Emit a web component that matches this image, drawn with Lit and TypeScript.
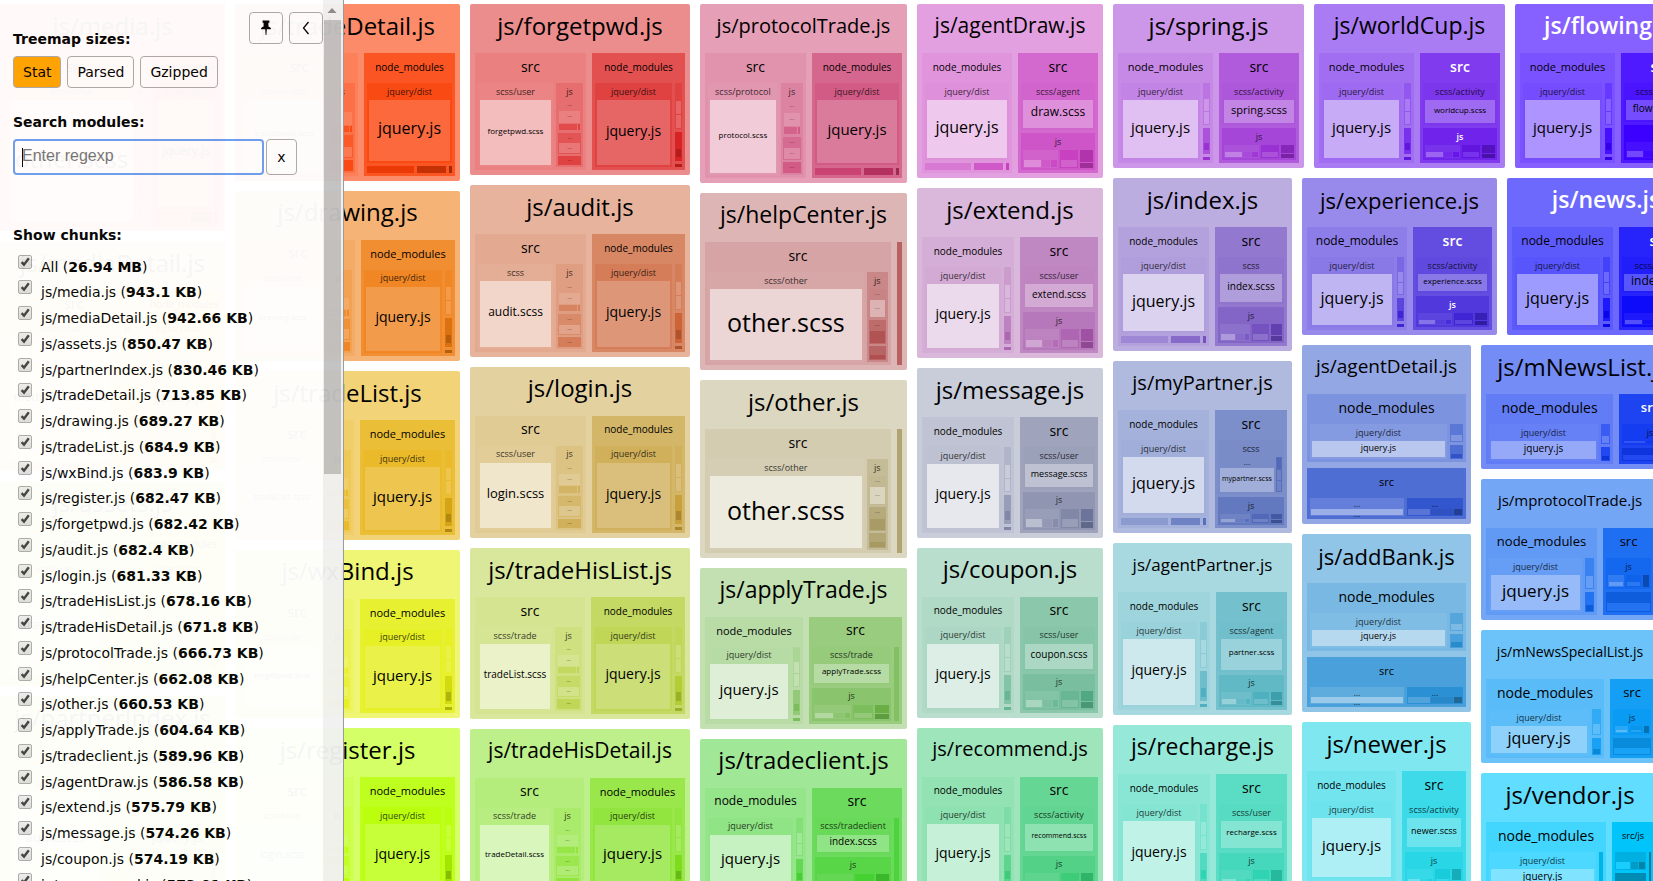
import { LitElement, html, css, svg, nothing, TemplateResult } from "lit";
import { customElement, property, state } from "lit/decorators.js";
import { classMap } from "lit/directives/class-map.js";

type Dir = "row" | "column";

interface Box {
  w: number;
  dir: Dir;
  level: number;
  label?: string;
  size?: number;
  light?: boolean;
  shade?: number;
  hsl?: [number, number, number];
  kids: Box[];
}

/* ---------- builders: w is the share that a box takes of its parent ---------- */

const layout = (w: number, dir: Dir, kids: Box[]): Box => ({ w, dir, level: 0, kids });
const strip = (w: number, dir: Dir, kids: Box[]): Box => ({ w, dir, level: 6, kids });
const block = (w: number, shade: number, kids: Box[] = [], dir: Dir = "column", label?: string, size = 6): Box => ({
  w, dir, level: kids.length ? 4 : 7, shade, kids, label, size,
});
const dots = (w: number, shade: number, size = 6): Box => block(w, shade, [], "column", "...", size);
const leaf = (label: string, size: number, shade: number, w = 1): Box => ({
  w, dir: "column", level: 5, label, size, shade, kids: [],
});
const group = (w: number, level: number, label: string, size: number, shade: number, dir: Dir, kids: Box[]): Box => ({
  w, dir, level, label, size, shade, kids,
});

const dist = (w: number, size: number, base: number, leafShade: number) =>
  group(w, 3, "jquery/dist", 9, base, "column", [leaf("jquery.js", size, leafShade)]);

const sideStrip = (s: number) =>
  strip(7, "column", [
    block(44, s - 3, [block(16, s - 3), block(13, s + 5), block(13, s + 5)]),
    block(28, s - 11, [block(15, s - 11), block(9, s - 19), block(2, s - 11)]),
    block(3, s - 19),
  ]);

const footStrip = (s: number) =>
  strip(7, "row", [block(45, s - 6), block(28, s - 14), block(3, s - 20)]);

/** node_modules drawn in the stronger tone, right of src. */
const nmDark = (w: number, nm: number, jq: number, foot = false) =>
  group(w, 2, "node_modules", nm, -14, foot ? "column" : "row", [
    dist(foot ? 79 : w - 16, jq, -17, -9),
    foot ? footStrip(-17) : sideStrip(-14),
  ]);

/** node_modules drawn in the pale tone, left of src. */
const nmPale = (w: number, nm: number, jq: number, foot = false) =>
  group(w, 2, "node_modules", nm, -3, foot ? "column" : "row", [
    dist(foot ? 76 : w - 16, jq, -4, 10),
    foot ? footStrip(-4) : sideStrip(-5),
  ]);

const jsTall = (w: number, s: number) =>
  group(w, 3, "js", 9, s, "column", [
    block(29, s, [
      dots(9, s),
      dots(11, s + 4),
      layout(6, "row", [block(17, s - 8), block(2, s - 10)]),
    ]),
    block(20, s - 6, [dots(8, s - 6), dots(9, s + 2)]),
    dots(9, s - 10),
  ]);

const jsFlat = (w: number, s: number) =>
  group(w, 3, "js", 9, s, "row", [
    block(33, s + 3, [block(7, s + 3), layout(6, "row", [block(13, s + 14), block(7, s + 1), block(4, s - 3)])]),
    block(18, s - 5, [block(7, s - 5), block(6, s + 3)]),
    layout(12, "column", [block(8, s - 12), block(4, s - 17)]),
  ]);

const srcTall = (w: number, folder: string, file: string, size: number, scssW = w - 36, jsW = 27) =>
  group(w, 2, "src", 14, -3, "row", [
    group(scssW, 3, folder, 9, -2, "column", [leaf(file, size, 11)]),
    jsTall(jsW, -7),
  ]);

const srcFrom = (w: number, stack: Box[], tail = false): Box =>
  group(w, 2, "src", 14, -14, "row", tail ? [layout(78, "column", stack), block(5, -22)] : [layout(1, "column", stack)]);

const srcStack = (w: number, folder: string, file: string, size: number, top: number, foot: number, tail = false): Box =>
  srcFrom(w, [group(top, 3, folder, 9, -15, "column", [leaf(file, size, -4)]), jsFlat(foot, -19)], tail);

const srcWide = (h: number): Box[] => [
  group(184, 2, "src", 14, -5, "row", [
    group(154, 3, "scss/other", 9, -4, "column", [leaf("other.scss", 25, 9)]),
    group(21, 3, "js", 9, -13, "column", [
      block(26, -14, [dots(8, -14), dots(h, -1)]),
      block(22, -21, [dots(9, -21), block(11, -28)]),
      block(13, -23, [block(6, -23), block(4, -29)]),
    ]),
  ]),
  block(5, -24),
];

const tile = (w: number, name: string, size: number, hsl: [number, number, number], kids: Box[], dir: Dir = "row", light = false): Box => ({
  w, dir, level: 1, label: `js/${name}.js`, size, hsl, shade: 0, kids, light,
});

const stackedTile = (w: number, name: string, size: number, hsl: [number, number, number]) =>
  tile(w, name, size, hsl, [
    group(67, 2, "node_modules", 14, -6, "row", [
      dist(134, 9, -4, 9),
      strip(13, "column", [block(17, -14, [block(8, -14), block(5, -5)]), block(13, -17, [block(6, -17), block(4, -26)])]),
    ]),
    group(50, 2, "src", 11, -17, "row", [
      block(92, -12, [dots(9, -12, 9), dots(7, 2, 9)]),
      block(55, -24, [dots(9, -24, 9), layout(6, "row", [block(20, -15), block(20, -27), block(7, -38)])]),
    ]),
  ], "column");

const withLightJs = (box: Box): Box => ({
  ...box,
  light: true,
  kids: box.kids.map((k) => ({ ...k, kids: k.kids.map((c) => (c.label === "js" ? { ...c, light: true } : c)) })),
});

const miniSrc = (w: number, light = false): Box => {
  const s = -18;
  return {
    ...group(w, 2, "src", 13, s, "column", [
      group(30, 3, "js", 9, s - 2, "row", [
        block(16, s + 4, [block(5, s + 4), block(5, s + 14)]),
        block(14, s - 4, [block(5, s - 4), block(4, s + 3)]),
        block(6, s - 16),
      ]),
      block(19, s - 7, [block(8, s - 7), block(7, s + 1)]),
    ]),
    light,
  };
};

const nmShort = (w: number, nm: number, jq: number) =>
  group(w, 2, "node_modules", nm, -4, "row", [
    dist(w - 18, jq, -3, 7),
    strip(9, "column", [block(26, -12, [block(14, -12), block(10, -3)]), block(17, -17, [block(9, -17), block(5, -26)])]),
  ]);

/* ---------- the bundle ---------- */

const treemap: Box = layout(1, "row", [
  layout(225, "column", [
    tile(227, "media", 24, [14, 100, 70], [srcTall(141, "scss/other", "other.scss", 24, 135, 0), nmDark(68, 10, 12, true)]),
    tile(230, "mediaDetail", 24, [48, 100, 70], [srcTall(135, "scss/other", "mediaDetail.scss", 12, 102, 24), nmDark(70, 10, 13)]),
    tile(205, "assets", 24, [60, 90, 72], [srcTall(132, "scss/user", "drawing.scss", 12, 92, 30), nmDark(74, 10, 13)]),
    tile(201, "partnerIndex", 24, [66, 90, 72], [srcTall(132, "scss/user", "audit.scss", 13, 92, 30), nmDark(74, 10, 13)]),
  ]),
  layout(225, "column", [
    tile(176, "tradeDetail", 24, [14, 96, 70], [srcTall(118, "scss/trade", "tradeDetail.scss", 8), nmDark(91, 10, 16, true)]),
    tile(170, "drawing", 24, [29, 87, 71], [srcTall(115, "scss/user", "drawing.scss", 8), nmDark(94, 11, 14)]),
    tile(168, "tradeList", 24, [45, 82, 71], [srcTall(114, "scss/user", "tradeList.scss", 9), nmDark(95, 11, 15)]),
    tile(168, "wxBind", 24, [63, 87, 71], [srcTall(114, "scss/user", "forgetpwd.scss", 8), nmDark(95, 11, 15)]),
    tile(168, "register", 24, [77, 100, 70], [srcTall(114, "scss/user", "login.scss", 10), nmDark(95, 11, 14)]),
  ]),
  layout(220, "column", [
    tile(171, "forgetpwd", 24, [0, 72, 74], [srcTall(111, "scss/user", "forgetpwd.scss", 8), nmDark(93, 10, 14)]),
    tile(171, "audit", 24, [18, 60, 76], [srcTall(111, "scss", "audit.scss", 12), nmDark(93, 10, 14)]),
    tile(171, "login", 24, [43, 56, 76], [srcTall(111, "scss/user", "login.scss", 13), nmDark(93, 10, 14)]),
    tile(170, "tradeHisList", 24, [71, 61, 76], [srcTall(110, "scss/trade", "tradeList.scss", 10), nmDark(94, 10, 14)]),
    tile(168, "tradeHisDetail", 21, [90, 76, 74], [srcTall(109, "scss/trade", "tradeDetail.scss", 8), nmDark(95, 11, 15)]),
  ]),
  layout(207, "column", [
    tile(179, "protocolTrade", 20, [339, 57, 76], [srcTall(101, "scss/protocol", "protocol.scss", 8, 69, 22), nmDark(90, 10, 15, true)]),
    tile(177, "helpCenter", 23, [0, 38, 79], srcWide(16)),
    tile(177, "other", 24, [48, 28, 81], srcWide(16)),
    tile(161, "applyTrade", 23, [100, 43, 79], [nmPale(98, 11, 15), srcStack(93, "scss/trade", "applyTrade.scss", 8, 38, 33, true)]),
    tile(158, "tradeclient", 24, [113, 63, 75], [nmPale(101, 12, 15), srcStack(90, "scss/tradeclient", "index.scss", 10, 36, 32, true)]),
  ]),
  layout(186, "column", [
    tile(174, "agentDraw", 21, [303, 55, 76], [nmPale(90, 10, 16, true), srcStack(80, "scss/agent", "draw.scss", 12, 46, 36)]),
    tile(170, "extend", 24, [297, 33, 79], [nmPale(92, 10, 14), srcStack(78, "scss/user", "extend.scss", 10, 41, 37)]),
    tile(169, "message", 24, [229, 18, 82], [nmPale(92, 10, 14), srcStack(78, "scss/user", "message.scss", 9, 41, 38)]),
    tile(170, "coupon", 24, [153, 35, 80], [nmPale(92, 10, 14), srcStack(78, "scss/user", "coupon.scss", 10, 43, 35)]),
    tile(169, "recommend", 20, [145, 58, 76], [nmPale(92, 10, 14), srcStack(78, "scss/activity", "recommend.scss", 7, 46, 33)]),
  ]),
  layout(592, "column", [
    layout(164, "row", [
      tile(191, "spring", 24, [279, 65, 75], [nmPale(95, 11, 15), srcStack(80, "scss/activity", "spring.scss", 11, 41, 31)]),
      tile(191, "worldCup", 23, [263, 83, 72], [nmPale(95, 11, 15), withLightJs(srcStack(80, "scss/activity", "worldcup.scss", 8, 41, 31))]),
      tile(190, "flowing", 23, [254, 100, 69], [nmPale(95, 11, 15), withLightJs(srcStack(79, "scss/activity", "flowing.scss", 10, 38, 34))], "row", true),
    ]),
    layout(719, "row", [
      layout(179, "column", [
        tile(173, "index", 24, [258, 47, 78], [nmPale(91, 10, 16, true), srcStack(72, "scss", "index.scss", 10, 46, 35)]),
        tile(172, "myPartner", 20, [226, 42, 78], [
          nmPale(91, 10, 16, true),
          srcFrom(72, [
            group(54, 3, "scss", 9, -15, "row", [
              layout(52, "column", [dots(9, -15, 9), leaf("mypartner.scss", 7, -4, 21)]),
              block(6, -24, [block(10, -26), block(9, -18), block(9, -18)]),
            ]),
            jsFlat(28, -21),
          ]),
        ]),
        tile(172, "agentPartner", 17, [188, 47, 77], [nmPale(92, 10, 14), srcStack(71, "scss/agent", "partner.scss", 8, 49, 32)]),
        tile(172, "recharge", 23, [169, 65, 75], [nmPale(92, 10, 14), srcStack(71, "scss/user", "recharge.scss", 8, 45, 36)]),
      ]),
      layout(403, "column", [
        layout(157, "row", [
          tile(195, "experience", 22, [249, 70, 73], [nmPale(100, 12, 16), withLightJs(srcStack(79, "scss/activity", "experience.scss", 8, 38, 32))]),
          tile(198, "news", 23, [241, 96, 70], [nmPale(101, 12, 16), withLightJs(srcStack(81, "scss/activity", "index.scss", 12, 38, 32))], "row", true),
        ]),
        layout(552, "row", [
          layout(169, "column", [
            stackedTile(179, "agentDetail", 19, [226, 61, 74]),
            stackedTile(178, "addBank", 22, [204, 66, 74]),
            tile(175, "newer", 24, [185, 79, 72], [nmPale(89, 10, 15, true), srcStack(64, "scss/activity", "newer.scss", 9, 47, 36)]),
          ]),
          layout(224, "column", [
            layout(124, "row", [
              tile(205, "mNewsList", 24, [229, 88, 71], [nmShort(127, 14, 10), miniSrc(62, true)]),
              layout(9, "row", []),
            ]),
            layout(418, "row", [
              layout(178, "column", [
                tile(141, "mprotocolTrade", 15, [217, 88, 71], [nmShort(111, 13, 17), miniSrc(51)]),
                tile(133, "mNewsSpecialList", 14, [203, 92, 70], [nmShort(118, 14, 16), miniSrc(44)]),
                tile(124, "vendor", 24, [193, 100, 69], [
                  group(120, 2, "node_modules", 14, -6, "row", [dist(107, 10, -4, 6), block(4, -24)]),
                  group(42, 2, "src/js", 9, -20, "row", [
                    layout(31, "column", [
                      block(20, -25, [block(8, -25), layout(7, "row", [block(12, -14), block(7, -30), block(5, -36)])]),
                      block(18, -34),
                    ]),
                    block(2, -38),
                  ]),
                ]),
              ]),
              layout(36, "row", []),
            ]),
          ]),
        ]),
      ]),
    ]),
  ]),
]);

const chunks: [string, string][] = [
  ["All", "26.94 MB"],
  ["js/media.js", "943.1 KB"],
  ["js/mediaDetail.js", "942.66 KB"],
  ["js/assets.js", "850.47 KB"],
  ["js/partnerIndex.js", "830.46 KB"],
  ["js/tradeDetail.js", "713.85 KB"],
  ["js/drawing.js", "689.27 KB"],
  ["js/tradeList.js", "684.9 KB"],
  ["js/wxBind.js", "683.9 KB"],
  ["js/register.js", "682.47 KB"],
  ["js/forgetpwd.js", "682.42 KB"],
  ["js/audit.js", "682.4 KB"],
  ["js/login.js", "681.33 KB"],
  ["js/tradeHisList.js", "678.16 KB"],
  ["js/tradeHisDetail.js", "671.8 KB"],
  ["js/protocolTrade.js", "666.73 KB"],
  ["js/helpCenter.js", "662.08 KB"],
  ["js/other.js", "660.53 KB"],
  ["js/applyTrade.js", "604.64 KB"],
  ["js/tradeclient.js", "589.96 KB"],
  ["js/agentDraw.js", "586.58 KB"],
  ["js/extend.js", "575.79 KB"],
  ["js/message.js", "574.26 KB"],
  ["js/coupon.js", "574.19 KB"],
  ["js/recommend.js", "573.01 KB"],
];

/** Horizontal and vertical padding of each level, left out of the share that grows. */
const PADDING: Record<number, Record<Dir, number>> = {
  1: { row: 10, column: 5 },
  2: { row: 6, column: 3 },
  3: { row: 4, column: 2 },
  4: { row: 2, column: 2 },
};

@customElement("tree-map")
export class TreeMap extends LitElement {
  @property({ attribute: false }) root: Box = treemap;

  static styles = css`
    :host {
      display: flex;
      box-sizing: border-box;
      padding-top: 4px;
      font-family: "Open Sans", "Noto Sans", sans-serif;
      color: #000;
    }
    .box {
      display: flex;
      flex-direction: column;
      min-width: 0;
      min-height: 0;
      box-sizing: border-box;
    }
    .body {
      display: flex;
      flex: 1 1 0;
      min-width: 0;
      min-height: 0;
    }
    .body.column {
      flex-direction: column;
    }
    .label {
      display: flex;
      align-items: center;
      justify-content: center;
      flex: none;
      box-sizing: border-box;
      white-space: nowrap;
      line-height: 1;
    }
    .l0 > .body { gap: 10px; }
    .l1 { border-radius: 2px; padding: 0 5px 5px; }
    .l1 > .label { height: 49px; padding-bottom: 6px; }
    .l1 > .body { gap: 6px; }
    .l2 { padding: 0 3px 3px; }
    .l2 > .label { height: 30px; padding-bottom: 3px; }
    .l2 > .body { gap: 3px; }
    .l2 .l0 > .body { gap: 3px; }
    .l3 { padding: 0 2px 2px; }
    .l3 > .label { height: 17px; opacity: 0.75; padding-bottom: 1px; }
    .l3 > .body { gap: 2px; }
    .l3 .l0 > .body, .l4 .l0 > .body { gap: 1px; }
    .l4 { padding: 1px; }
    .l4 > .body { gap: 1px; }
    .l5 > .label { flex: 1; padding-bottom: 4px; }
    .l6 > .body { gap: 3px; }
    .l7 > .label { flex: 1; opacity: 0.7; padding-bottom: 3px; }
    .light > .label {
      color: #fff;
      font-weight: 600;
      opacity: 1;
    }
  `;

  private draw(box: Box, [h, s, l]: [number, number, number], along: Dir): TemplateResult {
    const tone = box.hsl ?? [h, s, l];
    const fill = box.shade === undefined ? "none" : `hsl(${tone[0]} ${tone[1]}% ${tone[2] + box.shade}%)`;
    const cls = classMap({ box: true, [`l${box.level}`]: true, light: !!box.light });
    const grow = Math.max(box.w - (PADDING[box.level]?.[along] ?? 0), 1);
    return html`<div class=${cls} style="flex:${grow} 1 0px;background:${fill}">
      ${box.label ? html`<div class="label" style="font-size:${box.size}px">${box.label}</div>` : nothing}
      ${box.kids.length ? html`<div class="body ${box.dir}">${box.kids.map((k) => this.draw(k, tone, box.dir))}</div>` : nothing}
    </div>`;
  }

  render() {
    return this.draw(this.root, [0, 0, 80], "row");
  }
}

@customElement("side-panel")
export class SidePanel extends LitElement {
  @state() private metric = "Stat";

  static styles = css`
    :host {
      display: flex;
      box-sizing: border-box;
      width: 344px;
      border-right: 1px solid #999;
      background: #fff;
      opacity: 0.96;
      overflow: hidden;
      font: 14px/16px Verdana, "DejaVu Sans", sans-serif;
      color: #000;
    }
    .content {
      flex: 1;
      min-width: 0;
      padding: 12px 0 0 13px;
    }
    .top {
      display: flex;
      justify-content: space-between;
      align-items: flex-start;
    }
    .tools {
      display: flex;
      gap: 6px;
    }
    h2, legend {
      margin: 0;
      padding: 0;
      font-size: 14px;
      line-height: 16px;
      font-weight: bold;
    }
    .sizes { padding-top: 19px; }
    .options {
      display: flex;
      gap: 6px;
      padding-top: 9px;
    }
    button {
      box-sizing: border-box;
      height: 32px;
      margin: 0;
      padding: 0 9px;
      border: 1px solid #aaa;
      border-radius: 4px;
      background: none;
      font: 14px/16px Verdana, "DejaVu Sans", sans-serif;
      color: #000;
    }
    button.on { background: #ffa500; }
    .tools button {
      display: grid;
      place-items: center;
      width: 34px;
      padding: 0;
    }
    .search {
      display: block;
      padding-top: 26px;
      font-weight: bold;
    }
    .field {
      display: flex;
      gap: 2px;
      padding-top: 9px;
      height: 36px;
    }
    .field input {
      box-sizing: border-box;
      width: 251px;
      height: 36px;
      padding: 0 7px 2px;
      border: 2px solid #6c9df1;
      border-radius: 4px;
      outline: none;
      background: linear-gradient(#000, #000) 7px center / 1px 19px no-repeat;
      caret-color: transparent;
      font: 16px "Liberation Sans", Arial, sans-serif;
    }
    .field input::placeholder { color: #757575; opacity: 1; }
    .field button {
      width: 31px;
      height: 36px;
      padding: 0;
    }
    fieldset {
      margin: 52px 0 0;
      padding: 0;
      border: 0;
    }
    ul {
      margin: 0;
      padding: 10px 0 0;
      list-style: none;
    }
    li { height: 26px; }
    li:nth-child(4n + 1) { height: 25px; }
    li label {
      display: flex;
      gap: 9px;
      padding: 2px 0 0 5px;
      line-height: 24px;
      white-space: nowrap;
    }
    li input {
      appearance: none;
      box-sizing: border-box;
      width: 14px;
      height: 14px;
      margin: 0;
      border: 1px solid #aaa;
      border-radius: 2px;
      background: linear-gradient(#ededed, #dcdcdc);
    }
    li input:checked {
      background: url("data:image/svg+xml,%3Csvg xmlns='http://www.w3.org/2000/svg' viewBox='0 0 12 12'%3E%3Cpath d='M2.6 6.2 5 8.6 9.8 2.2' fill='none' stroke='%23404040' stroke-width='2.4'/%3E%3C/svg%3E") center / 12px 12px no-repeat,
        linear-gradient(#ededed, #dcdcdc);
    }
    .scroll {
      display: flex;
      flex-direction: column;
      align-items: center;
      box-sizing: border-box;
      width: 20px;
      padding-right: 2px;
      background: #f1f1f1;
    }
    .arrow {
      flex: none;
      width: 18px;
      height: 20px;
    }
    .thumb {
      width: 17px;
      height: 52%;
      max-height: 454px;
      background: #c1c1c1;
    }
  `;

  render() {
    return html`
      <div class="content">
        <div class="top">
          <div class="sizes">
            <h2>Treemap sizes:</h2>
            <div class="options">
              ${["Stat", "Parsed", "Gzipped"].map(
                (name) => html`<button class=${classMap({ on: this.metric === name })} @click=${() => (this.metric = name)}>${name}</button>`
              )}
            </div>
          </div>
          <div class="tools">
            <button aria-label="Pin">
              <svg width="12" height="16" viewBox="0 0 12 16">
                ${svg`<path d="M2.600 0.600h6.800v2.200H8.400v3.600c1.500.5 2.600 1.300 2.600 2.800H6.800L6.400 15h-.8l-.4-5.800H1c0-1.500 1.100-2.300 2.600-2.800V2.800h-1z"/>`}
              </svg>
            </button>
            <button aria-label="Hide sidebar">
              <svg width="8" height="14" viewBox="0 0 8 14">
                <path d="M6.500 1 1.500 7l5 6" fill="none" stroke="#000" stroke-width="1.300" />
              </svg>
            </button>
          </div>
        </div>
        <label class="search" for="query">Search modules:</label>
        <div class="field">
          <input id="query" type="text" placeholder="Enter regexp" />
          <button aria-label="Clear">x</button>
        </div>
        <fieldset>
          <legend>Show chunks:</legend>
          <ul>
            ${chunks.map(
              ([name, size]) => html`<li><label><input type="checkbox" checked /><span>${name} (<strong>${size}</strong>)</span></label></li>`
            )}
          </ul>
        </fieldset>
      </div>
      <div class="scroll">
        <svg class="arrow" viewBox="0 0 18 20"><path d="M4.500 13h9L9 8z" fill="#8b8b8b" /></svg>
        <div class="thumb"></div>
      </div>
    `;
  }
}

@customElement("app-root")
export class AppRoot extends LitElement {
  static styles = css`
    :host {
      display: block;
      position: relative;
      height: 100vh;
      overflow: hidden;
      background: #fff;
    }
    tree-map {
      width: calc(100vw + 52px);
      height: calc(100vh + 16px);
    }
    side-panel {
      position: absolute;
      inset: 0 auto 0 0;
    }
  `;

  render() {
    return html`<tree-map></tree-map><side-panel></side-panel>`;
  }
}
